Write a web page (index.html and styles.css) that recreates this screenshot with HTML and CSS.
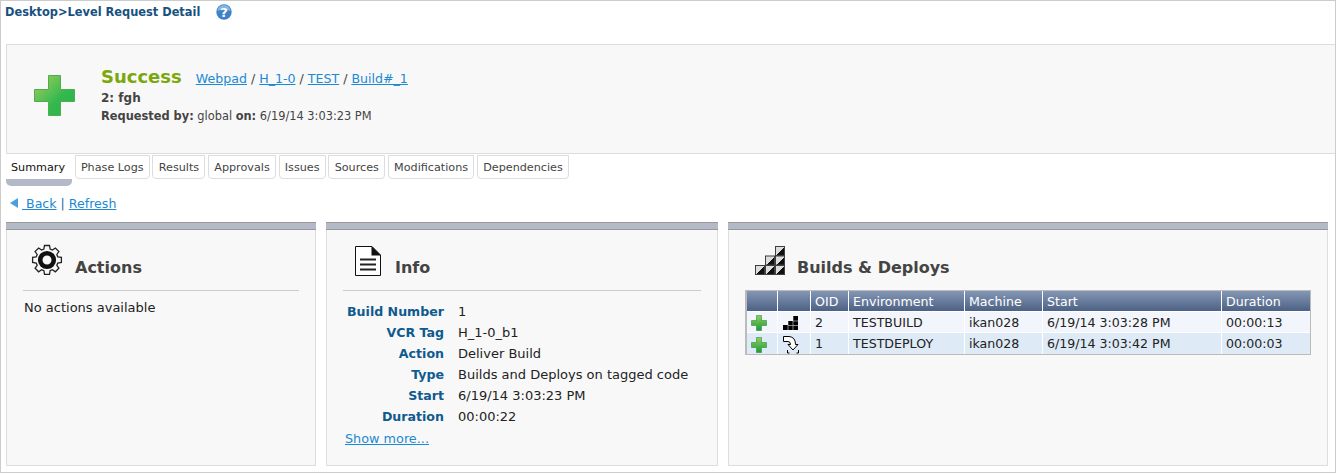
FILE: index.html
```html
<!DOCTYPE html>
<html lang="en">
<head>
  <meta charset="UTF-8" />
  <title>Level Request Detail</title>
  <link rel="stylesheet" href="styles.css">
</head>
<body>
  <svg class="defs" width="0" height="0">
    <defs>
      <linearGradient id="plusBig" x1="0" y1="0" x2="1" y2="1">
        <stop offset="0" stop-color="#a9cf5e"/>
        <stop offset="0.6" stop-color="#33b84f"/>
        <stop offset="1" stop-color="#2bb24c"/>
      </linearGradient>
      <linearGradient id="plusSmall" x1="0" y1="0" x2="0" y2="1">
        <stop offset="0" stop-color="#8fd05a"/>
        <stop offset="1" stop-color="#1f9a3a"/>
      </linearGradient>
      <linearGradient id="cell" x1="0" y1="0" x2="1" y2="1">
        <stop offset="0.55" stop-color="#ddd"/>
        <stop offset="0.55" stop-color="#111"/>
      </linearGradient>
    </defs>
  </svg>

  <div class="page">
    <div class="breadcrumb">
      <span>Desktop&gt;Level Request Detail</span>
      <svg class="help" width="16" height="16" viewBox="0 0 16 16">
        <circle cx="8" cy="8" r="7.7" fill="#3f83c6"/>
        <path d="M1.5 7A6.5 6 0 0 1 14.5 7Q8 4 1.5 7Z" fill="#86b6e2"/>
        <text x="8" y="12.6" text-anchor="middle" class="help-mark">?</text>
      </svg>
    </div>

    <div class="status">
      <svg class="status-icon" width="41" height="41" viewBox="0 0 41 41">
        <path d="M14.5 .5H26.5V14.5H40.5V26.5H26.5V40.5H14.5V26.5H.5V14.5H14.5Z" fill="url(#plusBig)" stroke="#4fae4c"/>
      </svg>
      <div class="status-text">
        <div class="status-line">
          <span class="status-name">Success</span>
          <span class="crumbs"><a href="#">Webpad</a> / <a href="#">H_1-0</a> / <a href="#">TEST</a> / <a href="#">Build#_1</a></span>
        </div>
        <div class="status-id">2: fgh</div>
        <div class="status-meta"><b>Requested by:</b> global <b>on:</b> 6/19/14 3:03:23 PM</div>
      </div>
    </div>

    <div class="tabs">
      <div class="tab active">Summary</div>
      <div class="tab">Phase Logs</div>
      <div class="tab">Results</div>
      <div class="tab">Approvals</div>
      <div class="tab">Issues</div>
      <div class="tab">Sources</div>
      <div class="tab">Modifications</div>
      <div class="tab">Dependencies</div>
    </div>

    <div class="nav-links">
      <span class="back-arrow"></span><a href="#">&nbsp;Back</a> | <a href="#">Refresh</a>
    </div>

    <div class="panels">
      <section class="panel">
        <div class="panel-bar"></div>
        <div class="panel-body">
          <div class="panel-head">
            <svg class="gear" width="32" height="32" viewBox="0 0 32 32">
              <path d="M13.5 1.5h5l.6 3.6 2.3 1 3-2.1 3.5 3.5-2.1 3 1 2.3 3.6.6v5l-3.6.6-1 2.3 2.1 3-3.5 3.5-3-2.1-2.3 1-.6 3.6h-5l-.6-3.6-2.3-1-3 2.1-3.5-3.5 2.1-3-1-2.3-3.6-.6v-5l3.6-.6 1-2.3-2.1-3 3.5-3.5 3 2.1 2.3-1z" fill="#f8f8f8" stroke="#222" stroke-width="1.3"/>
              <circle cx="16" cy="16" r="6.8" fill="none" stroke="#111" stroke-width="4.6"/>
            </svg>
            <h3>Actions</h3>
          </div>
          <p class="empty">No actions available</p>
        </div>
      </section>

      <section class="panel">
        <div class="panel-bar"></div>
        <div class="panel-body">
          <div class="panel-head">
            <svg class="doc" width="26" height="30" viewBox="0 0 26 30">
              <path d="M.5 .5H17L25.5 9V29.5H.5Z" fill="#fff" stroke="#111"/>
              <path d="M16.5 0L26 9.5H16.5Z" fill="#111"/>
              <path d="M5 13.5H21M5 18.5H21M5 23.5H21" stroke="#222" stroke-width="1.8"/>
            </svg>
            <h3 class="info-title">Info</h3>
          </div>
          <dl class="info">
            <dt>Build Number</dt><dd>1</dd>
            <dt>VCR Tag</dt><dd>H_1-0_b1</dd>
            <dt>Action</dt><dd>Deliver Build</dd>
            <dt>Type</dt><dd>Builds and Deploys on tagged code</dd>
            <dt>Start</dt><dd>6/19/14 3:03:23 PM</dd>
            <dt>Duration</dt><dd>00:00:22</dd>
          </dl>
          <a class="more" href="#">Show more...</a>
        </div>
      </section>

      <section class="panel">
        <div class="panel-bar"></div>
        <div class="panel-body">
          <div class="panel-head plain">
            <svg class="stairs" width="30" height="29" viewBox="0 0 30 29">
              <g fill="url(#cell)" stroke="#3f3f3f">
                <rect x="20.5" y=".5" width="9" height="9"/>
                <rect x="10.5" y="10" width="9" height="9"/>
                <rect x="20.5" y="10" width="9" height="9"/>
                <rect x=".5" y="19.5" width="9" height="9"/>
                <rect x="10.5" y="19.5" width="9" height="9"/>
                <rect x="20.5" y="19.5" width="9" height="9"/>
              </g>
            </svg>
            <h3>Builds &amp; Deploys</h3>
          </div>
          <table class="grid">
            <colgroup>
              <col class="c-status"><col class="c-type"><col class="c-oid"><col class="c-env"><col class="c-machine"><col class="c-start"><col class="c-dur">
            </colgroup>
            <thead>
              <tr><th></th><th></th><th>OID</th><th>Environment</th><th>Machine</th><th>Start</th><th>Duration</th></tr>
            </thead>
            <tbody>
              <tr>
                <td class="ic">
                  <svg width="16" height="16" viewBox="0 0 16 16"><path d="M5.5 .5H10.5V5.5H15.5V10.5H10.5V15.5H5.5V10.5H.5V5.5H5.5Z" fill="url(#plusSmall)" stroke="#2c8f3c" stroke-width=".6"/></svg>
                </td>
                <td class="ic type">
                  <svg width="16" height="16" viewBox="0 0 16 16">
                    <path d="M10 1h5v14H0v-5h5V6h5z" fill="#000"/>
                    <path d="M10 1v14M5 6v9M10 6h5M5 10.500h10" stroke="#fff" stroke-width=".7" opacity=".75"/>
                  </svg>
                </td>
                <td>2</td><td>TESTBUILD</td><td>ikan028</td><td>6/19/14 3:03:28 PM</td><td>00:00:13</td>
              </tr>
              <tr class="alt">
                <td class="ic">
                  <svg width="16" height="16" viewBox="0 0 16 16"><path d="M5.5 .5H10.5V5.5H15.5V10.5H10.5V15.5H5.5V10.5H.5V5.5H5.5Z" fill="url(#plusSmall)" stroke="#2c8f3c" stroke-width=".6"/></svg>
                </td>
                <td class="ic type">
                  <svg width="16" height="18" viewBox="0 0 16 18">
                    <path d="M.5 .5H6Q12.500 1 12.500 8.500H15L10 14 5 8.500H7.500Q7.500 5.500 5 5.500H.5Z" fill="#fff" stroke="#000"/>
                    <path d="M4.500 14v3h2M13.500 17h2v-3" fill="none" stroke="#000"/>
                  </svg>
                </td>
                <td>1</td><td>TESTDEPLOY</td><td>ikan028</td><td>6/19/14 3:03:42 PM</td><td>00:00:03</td>
              </tr>
            </tbody>
          </table>
        </div>
      </section>
    </div>
  </div>
</body>
</html>
```

FILE: styles.css
```css
* {
  box-sizing: border-box;
}
html, body {
  margin: 0;
  padding: 0;
}
body {
  font-family: "DejaVu Sans", Verdana, sans-serif;
  font-size: 13px;
  color: #222;
  background: #fff;
}
a {
  color: #1b8ad3;
  text-decoration: underline;
}
.defs {
  position: absolute;
}
.page {
  height: 473px;
  padding: 0 0 0 5px;
  border: 1px solid #ccc;
  overflow: hidden;
}

.breadcrumb {
  display: flex;
  align-items: center;
  gap: 16px;
  height: 22px;
  margin-left: -1px;
  font-size: 11.4px;
  font-weight: bold;
  color: #17517f;
}
.help {
  margin-top: -1px;
}
.help-mark {
  font-size: 13px;
  font-weight: bold;
  fill: #fff;
}

.status {
  display: flex;
  align-items: flex-start;
  height: 110px;
  margin-top: 21px;
  padding: 21px 0 0 27px;
  background: #f8f8f8;
  border: 1px solid #ddd;
  border-right: none;
}
.status-icon {
  margin-top: 9px;
}
.status-text {
  margin-left: 26px;
  color: #444;
}
.status-line {
  display: flex;
  align-items: baseline;
  gap: 14px;
  height: 24px;
}
.status-name {
  font-size: 18px;
  font-weight: bold;
  color: #7aa80a;
}
.crumbs {
  font-size: 12.6px;
}
.status-id {
  font-size: 12px;
  font-weight: bold;
  height: 18px;
  line-height: 16px;
}
.status-meta {
  font-size: 11.4px;
  line-height: 16px;
}

.tabs {
  display: flex;
  gap: 2.500px;
  height: 31px;
  padding-top: 1px;
  align-items: flex-start;
}
.tab {
  height: 24px;
  padding: 0 5.300px;
  line-height: 24px;
  font-size: 11.2px;
  color: #444;
  background: #fff;
  border: 1px solid #ddd;
  border-radius: 0 0 4px 4px;
}
.tab.active {
  height: 31px;
  padding: 0 7px 0 5px;
  color: #111;
  line-height: 26px;
  border: none;
  border-bottom: 7px solid #b3b9c6;
  border-radius: 0 0 5px 5px;
}

.nav-links {
  display: flex;
  align-items: center;
  gap: 4px;
  height: 37px;
  padding: 0 0 1px 4px;
  font-size: 12.6px;
  color: #1b6aa5;
}
.back-arrow {
  width: 0;
  height: 0;
  border: 5px solid transparent;
  border-left: none;
  border-right: 8px solid #4aa0df;
}

.panels {
  display: grid;
  grid-template-columns: 310px 392px 600px;
  gap: 10px;
  height: 244px;
}
.panel {
  background: #f8f8f8;
  border: 1px solid #ddd;
  border-top: none;
}
.panel-bar {
  height: 8px;
  margin: 0 -1px;
  background: #b3b9c6;
  border-top: 1px solid #999;
  border-bottom: 1px solid #999;
}
.panel-body {
  padding: 0 16px;
}
.panel-head {
  display: flex;
  align-items: flex-end;
  height: 61px;
  border-bottom: 1px solid #ccc;
  padding-bottom: 14px;
}
.panel-head.plain {
  border-bottom: none;
  padding-left: 10px;
  height: 60px;
}
.panel-head h3 {
  margin: 0 0 -2px 12px;
  font-size: 16px;
  line-height: 20px;
  color: #444;
}
.panel-head h3.info-title {
  margin-left: 14px;
}
.gear {
  margin-left: 8px;
}
.doc {
  margin-left: 12px;
}
.stairs {
  margin-bottom: 1px;
}

.empty {
  margin: 9px 0 0 1px;
}

.info {
  display: grid;
  grid-template-columns: 101px 1fr;
  column-gap: 14px;
  grid-auto-rows: 21px;
  margin: 10px 0 0 0;
  line-height: 21px;
}
.info dt {
  text-align: right;
  font-size: 12.6px;
  font-weight: bold;
  color: #0f5a8e;
}
.info dd {
  margin: 0;
  color: #222;
}
.more {
  display: block;
  margin: 4px 0 0 2px;
  font-size: 12.8px;
}

.grid {
  border-collapse: separate;
  border-spacing: 0;
  table-layout: fixed;
  width: 566px;
  background: #fff;
  border: 1px solid #bbb;
  border-left-width: 2px;
  font-size: 12.6px;
}
.c-status { width: 31px; }
.c-type { width: 33px; }
.c-oid { width: 38px; }
.c-env { width: 116px; }
.c-machine { width: 78px; }
.c-start { width: 179px; }
.grid th {
  height: 21px;
  padding: 0 4px;
  text-align: left;
  font-weight: normal;
  color: #fff;
  background: linear-gradient(#8497b5, #4d6184);
  border-right: 1px solid #fff;
  border-bottom: 1px solid #fff;
}
.grid td {
  height: 21px;
  padding: 0 4px;
  color: #222;
  background: #f2f6fc;
  border-right: 1px solid #fff;
  border-bottom: 1px solid #fff;
}
.grid th:last-child, .grid td:last-child {
  border-right: none;
}
.grid tr.alt td {
  background: #deebf6;
  border-bottom: none;
}
.grid td.ic {
  padding: 2px 0 0 4px;
  line-height: 0;
}
.grid td.ic.type {
  padding-left: 5px;
}
.grid td.ic svg {
  display: block;
}
```
